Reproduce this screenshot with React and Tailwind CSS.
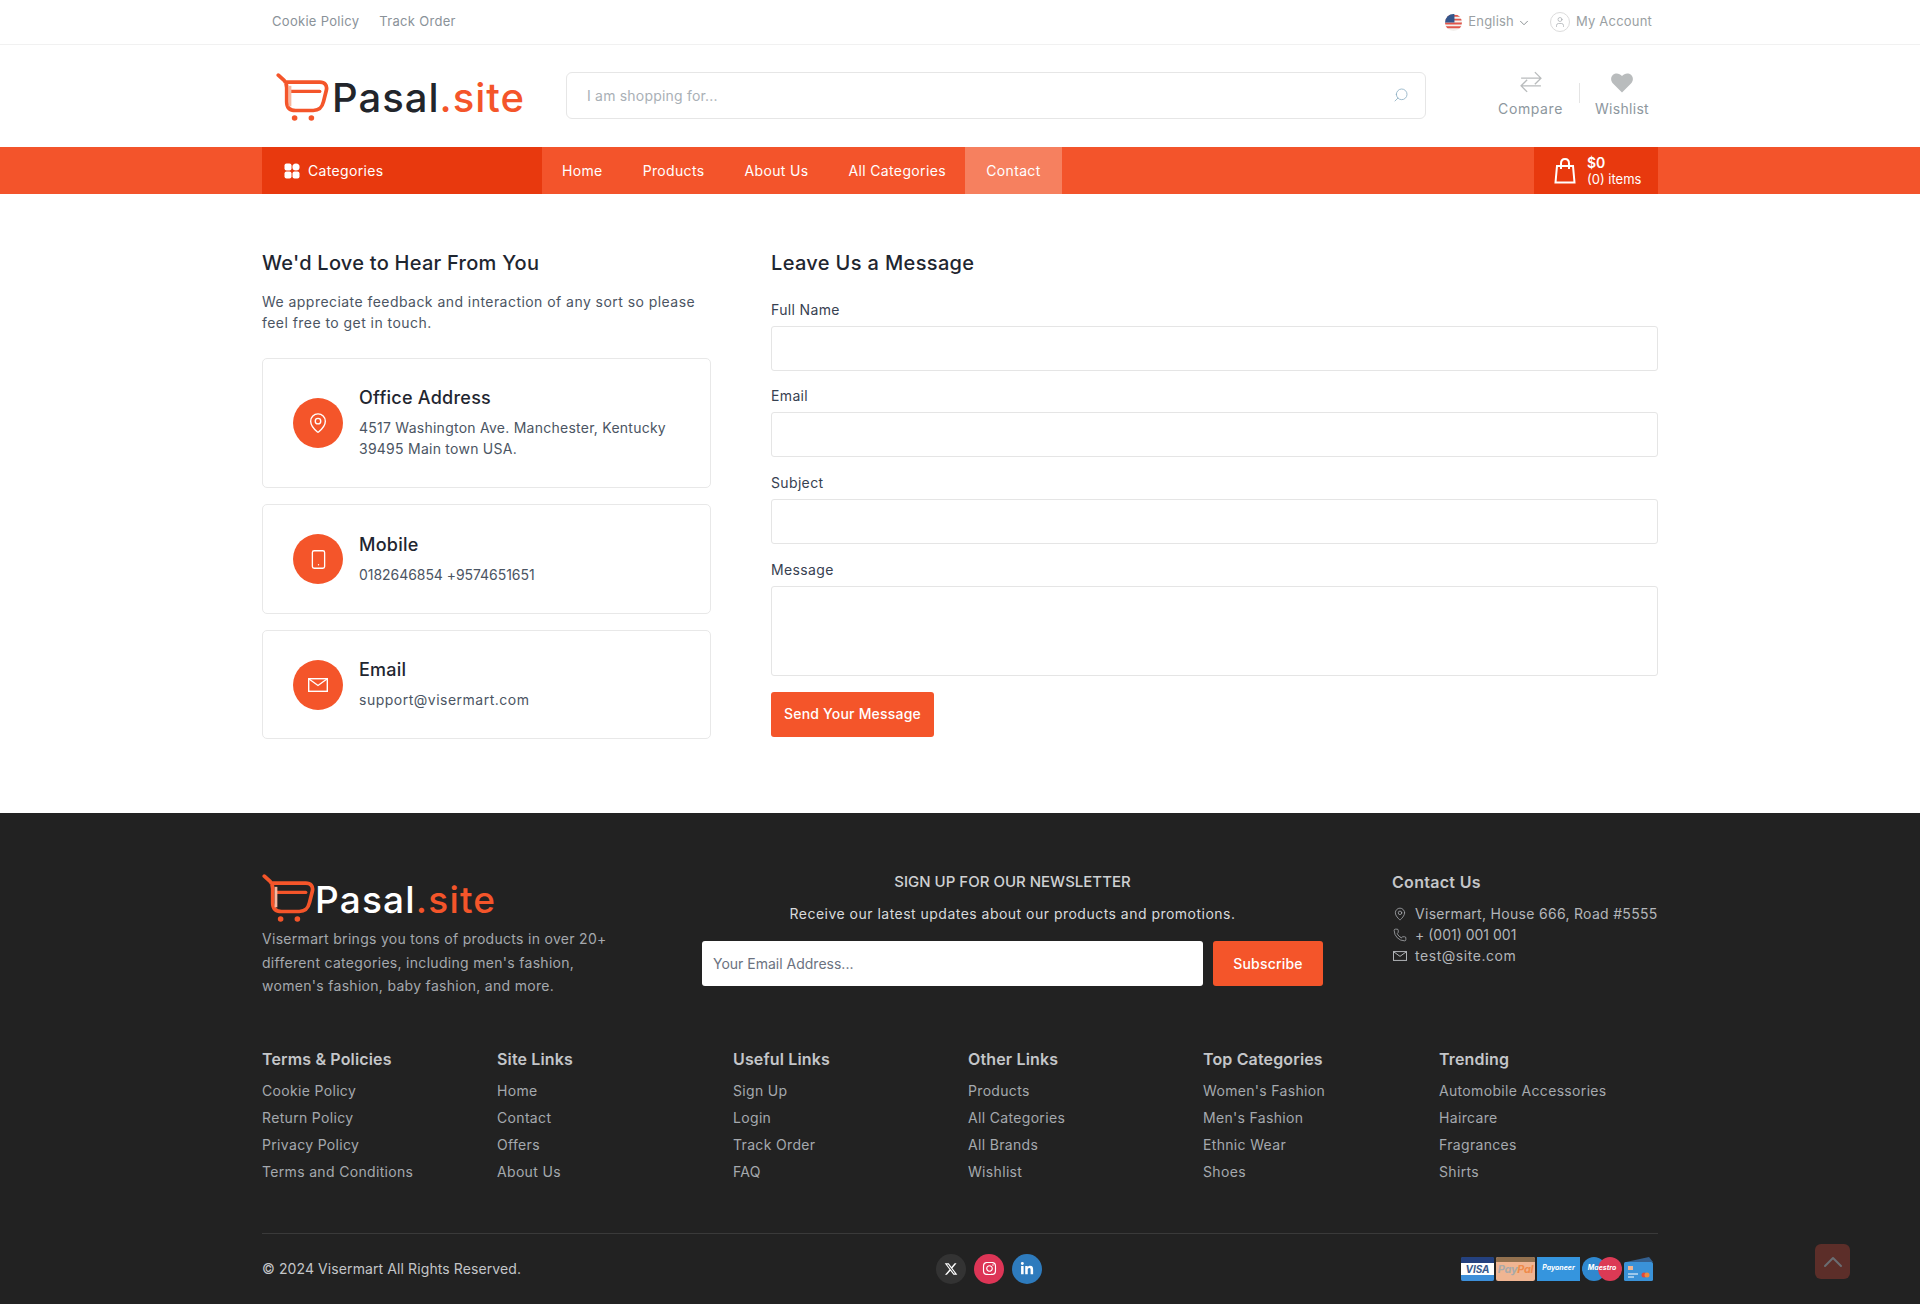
import { ChevronDown, ChevronUp, MapPin, Phone, Search, Smartphone, User } from "lucide-react";
import { FaInstagram, FaLinkedinIn, FaXTwitter } from "react-icons/fa6";

const footerLinks = [
  { title: "Terms & Policies", width: "w-[235px]", links: ["Cookie Policy", "Return Policy", "Privacy Policy", "Terms and Conditions"] },
  { title: "Site Links", width: "w-[236px]", links: ["Home", "Contact", "Offers", "About Us"] },
  { title: "Useful Links", width: "w-[235px]", links: ["Sign Up", "Login", "Track Order", "FAQ"] },
  { title: "Other Links", width: "w-[235px]", links: ["Products", "All Categories", "All Brands", "Wishlist"] },
  { title: "Top Categories", width: "w-[236px]", links: ["Women's Fashion", "Men's Fashion", "Ethnic Wear", "Shoes"] },
  { title: "Trending", width: "w-[219px]", links: ["Automobile Accessories", "Haircare", "Fragrances", "Shirts"] },
];

function CartLogo({ className }) {
  return (
    <svg viewBox="0 0 58 52" fill="none" className={className}>
      <path d="M2.5 2.5 L9 8.5 C11 10.5 11.5 13 11.5 16 L11.5 31 C11.5 37.5 15 40.5 21 40.5 L40 40.5 C47 40.5 49.5 37 51 31 L54 19 C55.5 13 52 10 47 10 L10 10" stroke="#f4552a" strokeWidth="4" strokeLinecap="round" strokeLinejoin="round" />
      <path d="M16 20 L47 20" stroke="#f4552a" strokeWidth="3.5" strokeLinecap="round" />
      <path d="M15 14 L15 36" stroke="#f7b79f" strokeWidth="3" />
      <circle cx="20" cy="48.5" r="3" fill="#f4552a" />
      <circle cx="38" cy="48.5" r="3" fill="#f4552a" />
    </svg>
  );
}

function CategoryIcon() {
  return (
    <svg viewBox="0 0 16 16" fill="white" className="w-4 h-4">
      <rect x="0.5" y="0.5" width="7" height="7" rx="2" />
      <circle cx="12" cy="4" r="3.6" />
      <rect x="0.5" y="8.5" width="7" height="7" rx="2" />
      <rect x="8.5" y="8.5" width="7" height="7" rx="2" />
    </svg>
  );
}

function CompareIcon() {
  return (
    <svg viewBox="0 0 20 20" fill="none" stroke="#b9bcbd" strokeWidth="1.2" className="w-[22px] h-[22px]">
      <path d="M1 6.5 H19 M13.5 1 L19 6.5 L13.5 12" />
      <path d="M19 13.5 H1 M6.5 8 L1 13.5 L6.5 19" />
    </svg>
  );
}

function HeartIcon() {
  return (
    <svg viewBox="0 0 22 20" fill="#b9bcbd" className="w-[22px] h-5">
      <path d="M11 19.5 L2 10.5 C-0.5 8 -0.5 4 2 1.8 C4.5 -0.3 8.5 0 11 3 C13.5 0 17.5 -0.3 20 1.8 C22.5 4 22.5 8 20 10.5 Z" />
    </svg>
  );
}

function BagIcon() {
  return (
    <svg viewBox="0 0 22 26" fill="none" stroke="white" strokeWidth="2" className="w-[22px] h-[26px]">
      <path d="M3 8 H19 L20.5 24.5 H1.5 Z" />
      <path d="M7 11 V5.5 C7 2.5 8.8 1 11 1 C13.2 1 15 2.5 15 5.5 V11" />
    </svg>
  );
}

function EnvelopeIcon({ className, stroke }) {
  return (
    <svg viewBox="0 0 20 14" fill="none" stroke={stroke} strokeWidth="1.4" className={className}>
      <rect x="0.7" y="0.7" width="18.6" height="12.6" />
      <path d="M1 1 L10 7.5 L19 1" />
    </svg>
  );
}

function UsFlag() {
  return (
    <svg viewBox="0 0 18 18" className="w-[17px] h-[17px] rounded-full">
      <rect width="18" height="18" fill="#f3f1ee" />
      <path d="M0 2h18M0 6h18M0 10h18M0 14h18" stroke="#e0564b" strokeWidth="2" />
      <rect width="10" height="9" fill="#34558b" />
    </svg>
  );
}

function ContactCard({ icon, title, height, textClass, children }) {
  return (
    <div className={`flex items-center gap-4 border border-[#e8e8e8] rounded-[5px] pl-[30px] pr-6 ${height}`}>
      <div className="w-[50px] h-[50px] rounded-full bg-[#f4552a] flex items-center justify-center text-white shrink-0">
        {icon}
      </div>
      <div>
        <h5 className="text-[18px] leading-[22px] font-medium tracking-[0.25px] text-[#1f2630] mb-[8px]">{title}</h5>
        <p className={`text-[14px] leading-[21px] text-[#4b5563] ${textClass}`}>{children}</p>
      </div>
    </div>
  );
}

function Field({ label, className }) {
  return (
    <div className={className}>
      <label className="block text-[14px] leading-[20px] tracking-[0.35px] text-[#374151] mb-[6px]">{label}</label>
      <input className="block w-full h-[45px] border border-[#e5e5e5] rounded-[3px] bg-white" />
    </div>
  );
}

function PaymentIcons() {
  return (
    <div className="flex items-center gap-[2px] h-6">
      <div className="w-[33px] h-6 rounded-[2px] bg-[#2b5c9c] flex flex-col overflow-hidden">
        <div className="h-[6px] bg-[#24417f]" />
        <div className="h-[12px] bg-white flex items-center justify-center text-[10px] leading-none font-bold italic text-[#3a5a8c]">VISA</div>
        <div className="h-[6px] bg-[#3d8fd9]" />
      </div>
      <div className="w-[39px] h-6 rounded-[2px] bg-[#f0b592] flex flex-col overflow-hidden">
        <div className="h-[5px] bg-[#93714f]" />
        <div className="text-[11px] leading-[14px] font-bold italic text-center text-[#a9a9a9] tracking-[-0.3px]">Pay<span className="text-[#ef8a4a]">Pal</span></div>
      </div>
      <div className="w-[43px] h-6 bg-[#3595de] flex items-center justify-center text-[7px] font-bold italic text-white">Payoneer</div>
      <div className="relative w-[40px] h-6">
        <div className="absolute left-0 top-0 w-6 h-6 rounded-full bg-[#2f88cf]" />
        <div className="absolute right-0 top-0 w-6 h-6 rounded-full bg-[#dc3a55]" />
        <div className="absolute inset-0 flex items-center justify-center text-[7px] font-bold italic text-white">Maestro</div>
      </div>
      <svg viewBox="0 0 31 24" className="w-[31px] h-6">
        <path d="M2 5 L25 0 L29 5 Z" fill="#34608f" />
        <rect x="0" y="5" width="29" height="19" rx="1.5" fill="#3a92d8" />
        <rect x="4" y="9" width="5" height="4" fill="#f0b592" />
        <path d="M4 17h10M4 20h6" stroke="#fff" strokeWidth="1" />
        <circle cx="20" cy="18" r="2.5" fill="#e0483c" />
        <circle cx="23" cy="18" r="2.5" fill="#f08a3c" />
      </svg>
    </div>
  );
}

export default function App() {
  return (
    <div className="font-['Inter',sans-serif] bg-white min-h-[1304px]">

      {/* Top bar */}
      <div className="h-[45px] border-b border-[#f1f1f1]">
        <div className="w-[1396px] mx-auto h-full flex items-center justify-between pl-[10px] pr-[6px]">
          <div className="flex gap-5 text-[13px] tracking-[0.3px] text-[#8a9299]">
            <a>Cookie Policy</a>
            <a>Track Order</a>
          </div>
          <div className="flex items-center text-[13px] tracking-[0.2px] text-[#9a9fa3]">
            <UsFlag />
            <span className="ml-[6px]">English</span>
            <ChevronDown className="w-[14px] h-[14px] ml-[3px] mt-[2px] text-[#7d8286]" strokeWidth={1.5} />
            <span className="w-[20px] h-[20px] ml-[19px] border border-[#dcdcdc] rounded-full flex items-center justify-center">
              <User className="w-3 h-3" strokeWidth={1.25} />
            </span>
            <span className="ml-[6px]">My Account</span>
          </div>
        </div>
      </div>

      {/* Logo, search */}
      <div className="h-[102px]">
        <div className="w-[1396px] mx-auto h-full flex items-center">
          <div className="w-[304px] pl-[14px] flex items-center">
            <CartLogo className="w-[54px] h-[50px] mt-[2px]" />
            <span className="text-[40px] leading-none font-medium text-[#22252b] ml-[2px] mt-[4px] tracking-[1px]">Pasal<span className="text-[#f4552a]">.site</span></span>
          </div>
          <div className="w-[860px] h-[47px] -mt-[2px] border border-[#e6e6e6] rounded-[6px] flex items-center justify-between pl-5 pr-[16px]">
            <span className="text-[14px] tracking-[0.2px] text-[#a9b0b6]">I am shopping for...</span>
            <Search className="w-4 h-4 text-[#8eb0c4] -scale-x-100" strokeWidth={1.25} />
          </div>
          <div className="flex items-start ml-[71px] -mt-[3px]">
            <div className="flex flex-col items-center w-[67px]">
              <CompareIcon />
              <span className="text-[14px] leading-5 mt-[6px] tracking-[0.6px] text-[#8d979e]">Compare</span>
            </div>
            <div className="w-px h-5 bg-[#e4e4e4] mx-[15px] mt-[12px]" />
            <div className="flex flex-col items-center w-[54px] pt-[2px]">
              <HeartIcon />
              <span className="text-[14px] leading-5 mt-[6px] tracking-[0.3px] text-[#8d979e]">Wishlist</span>
            </div>
          </div>
        </div>
      </div>

      {/* Nav */}
      <div className="h-[47px] bg-[#f3542b]">
        <div className="w-[1396px] mx-auto h-full flex items-stretch text-[14px] tracking-[0.35px] text-white">
          <div className="w-[280px] bg-[#e8390e] flex items-center gap-[8px] pl-[22px]">
            <CategoryIcon />
            <span>Categories</span>
          </div>
          <a className="flex items-center px-5">Home</a>
          <a className="flex items-center px-5">Products</a>
          <a className="flex items-center px-5">About Us</a>
          <a className="flex items-center px-5">All Categories</a>
          <a className="flex items-center justify-center w-[97px] -ml-px bg-[#f6805f]">Contact</a>
          <div className="ml-auto w-[124px] bg-[#e8390e] flex items-center pl-[20px] gap-[11px]">
            <BagIcon />
            <div className="leading-[17px] tracking-normal">
              <div className="font-semibold text-[14px]">$0</div>
              <div className="text-[13px]">(0) items</div>
            </div>
          </div>
        </div>
      </div>

      {/* Contact */}
      <div className="w-[1396px] mx-auto flex justify-between pt-[56px] h-[619px]">
        <div className="w-[449px]">
          <h3 className="text-[20px] leading-[26px] font-medium tracking-[0.25px] text-[#1f2630]">We'd Love to Hear From You</h3>
          <p className="text-[14px] leading-[21px] tracking-[0.45px] text-[#4b5563] mt-[15px] mb-[25px]">
            We appreciate feedback and interaction of any sort so please<br />feel free to get in touch.
          </p>
          <div className="flex flex-col gap-4">
            <ContactCard icon={<MapPin className="w-[22px] h-[22px]" strokeWidth={1.5} />} title="Office Address" height="h-[130px]" textClass="tracking-[0.25px]">
              4517 Washington Ave. Manchester, Kentucky<br />39495 Main town USA.
            </ContactCard>
            <ContactCard icon={<Smartphone className="w-[21px] h-[21px]" strokeWidth={1.5} />} title="Mobile" height="h-[110px]" textClass="tracking-[-0.05px]">
              0182646854 +9574651651
            </ContactCard>
            <ContactCard icon={<EnvelopeIcon className="w-5 h-[14px]" stroke="white" />} title="Email" height="h-[109px]" textClass="tracking-[0.5px]">
              support@visermart.com
            </ContactCard>
          </div>
        </div>

        <div className="w-[887px]">
          <h3 className="text-[20px] leading-[26px] font-medium tracking-[0.35px] text-[#1f2630] mb-[24px]">Leave Us a Message</h3>
          <Field label="Full Name" className="mb-[15px]" />
          <Field label="Email" className="mb-[16px]" />
          <Field label="Subject" className="mb-[16px]" />
          <div>
            <label className="block text-[14px] leading-[20px] tracking-[0.35px] text-[#374151] mb-[6px]">Message</label>
            <textarea className="block w-full h-[90px] border border-[#e5e5e5] rounded-[3px] bg-white resize-none" />
          </div>
          <button className="mt-4 w-[163px] h-[45px] pb-[2px] bg-[#f4552a] text-white text-[14px] font-medium tracking-[0.2px] rounded-[3px]">Send Your Message</button>
        </div>
      </div>

      {/* Footer */}
      <footer className="relative bg-[#222222] h-[491px] pt-[60px]">
        <div className="w-[1396px] mx-auto">
          <div className="flex items-start h-[164px]">
            <div className="w-[440px]">
              <div className="flex items-center h-[50px]">
                <CartLogo className="w-[54px] h-[50px]" />
                <span className="text-[37px] leading-none font-medium text-white -ml-[1px] mt-[2px] tracking-[1.2px]">Pasal<span className="text-[#f4552a]">.site</span></span>
              </div>
              <p className="text-[14px] leading-[23.5px] tracking-[0.3px] text-[#a5a9ae] mt-[4px]">
                Visermart brings you tons of products in over 20+<br />
                different categories, including men's fashion,<br />
                women's fashion, baby fashion, and more.
              </p>
            </div>
            <div className="w-[621px] flex flex-col items-center">
              <h5 className="text-[15px] leading-[20px] font-medium text-[#cfd1d3] mt-[-1px]">SIGN UP FOR OUR NEWSLETTER</h5>
              <p className="text-[14px] leading-[20px] tracking-[0.48px] text-[#d8dadc] mt-[12px]">Receive our latest updates about our products and promotions.</p>
              <div className="flex w-full gap-[10px] mt-[17px]">
                <div className="w-[501px] h-[45px] pb-px bg-white rounded-[3px] flex items-center pl-[11px] text-[14px] text-[#6b7280]">Your Email Address...</div>
                <button className="w-[110px] h-[45px] pb-px bg-[#f4552a] text-white text-[14px] font-medium tracking-[0.2px] rounded-[3px]">Subscribe</button>
              </div>
            </div>
            <div className="ml-[69px] text-[14px] text-[#b3b6ba]">
              <h5 className="text-[16px] leading-[20px] font-semibold tracking-[0.3px] text-[#c4c6c9] mt-[-1px] mb-[11px]">Contact Us</h5>
              <div className="flex items-center gap-[8px] h-[21px] pl-px"><MapPin className="w-[14px] h-[14px]" strokeWidth={1.25} /><span className="tracking-[0.3px]">Visermart, House 666, Road #5555</span></div>
              <div className="flex items-center gap-[8px] h-[21px] pl-px"><Phone className="w-[14px] h-[14px]" strokeWidth={1.25} /><span>+ (001) 001 001</span></div>
              <div className="flex items-center gap-[8px] h-[21px] pl-px"><EnvelopeIcon className="w-[14px] h-[10px]" stroke="#b3b6ba" /><span className="tracking-[0.55px]">test@site.com</span></div>
            </div>
          </div>

          <div className="flex mt-[12px]">
            {footerLinks.map((col) => (
              <div key={col.title} className={col.width}>
                <h5 className="text-[16px] leading-[20px] font-semibold tracking-[0.15px] text-[#c4c6c9] mb-[8px]">{col.title}</h5>
                <ul>
                  {col.links.map((l) => (
                    <li key={l} className="text-[14px] leading-[27px] tracking-[0.33px] text-[#a5a9ae]">{l}</li>
                  ))}
                </ul>
              </div>
            ))}
          </div>

          <div className="mt-[48px] border-t border-[#3a3a3a] flex items-center justify-between h-[70px]">
            <p className="w-[479px] text-[14px] tracking-[0.1px] text-[#c4c6c9]">© 2024 Visermart All Rights Reserved.</p>
            <div className="flex gap-2">
              <span className="w-[30px] h-[30px] rounded-full bg-[#333333] flex items-center justify-center text-white"><FaXTwitter className="w-[14px] h-[14px]" /></span>
              <span className="w-[30px] h-[30px] rounded-full bg-[#dd3556] flex items-center justify-center text-white"><FaInstagram className="w-[15px] h-[15px]" /></span>
              <span className="w-[30px] h-[30px] rounded-full bg-[#2e7bbd] flex items-center justify-center text-white"><FaLinkedinIn className="w-[14px] h-[14px]" /></span>
            </div>
            <div className="w-[421px] flex justify-end pr-[3px]">
              <PaymentIcons />
            </div>
          </div>
        </div>

        {/* Scroll to top */}
        <div className="absolute left-[1815px] top-[431px] w-[35px] h-[35px] rounded-[6px] bg-[#5c2e29] flex items-center justify-center text-[#6a6d72]">
          <ChevronUp className="w-8 h-8" strokeWidth={1.5} />
        </div>
      </footer>
    </div>
  );
}
